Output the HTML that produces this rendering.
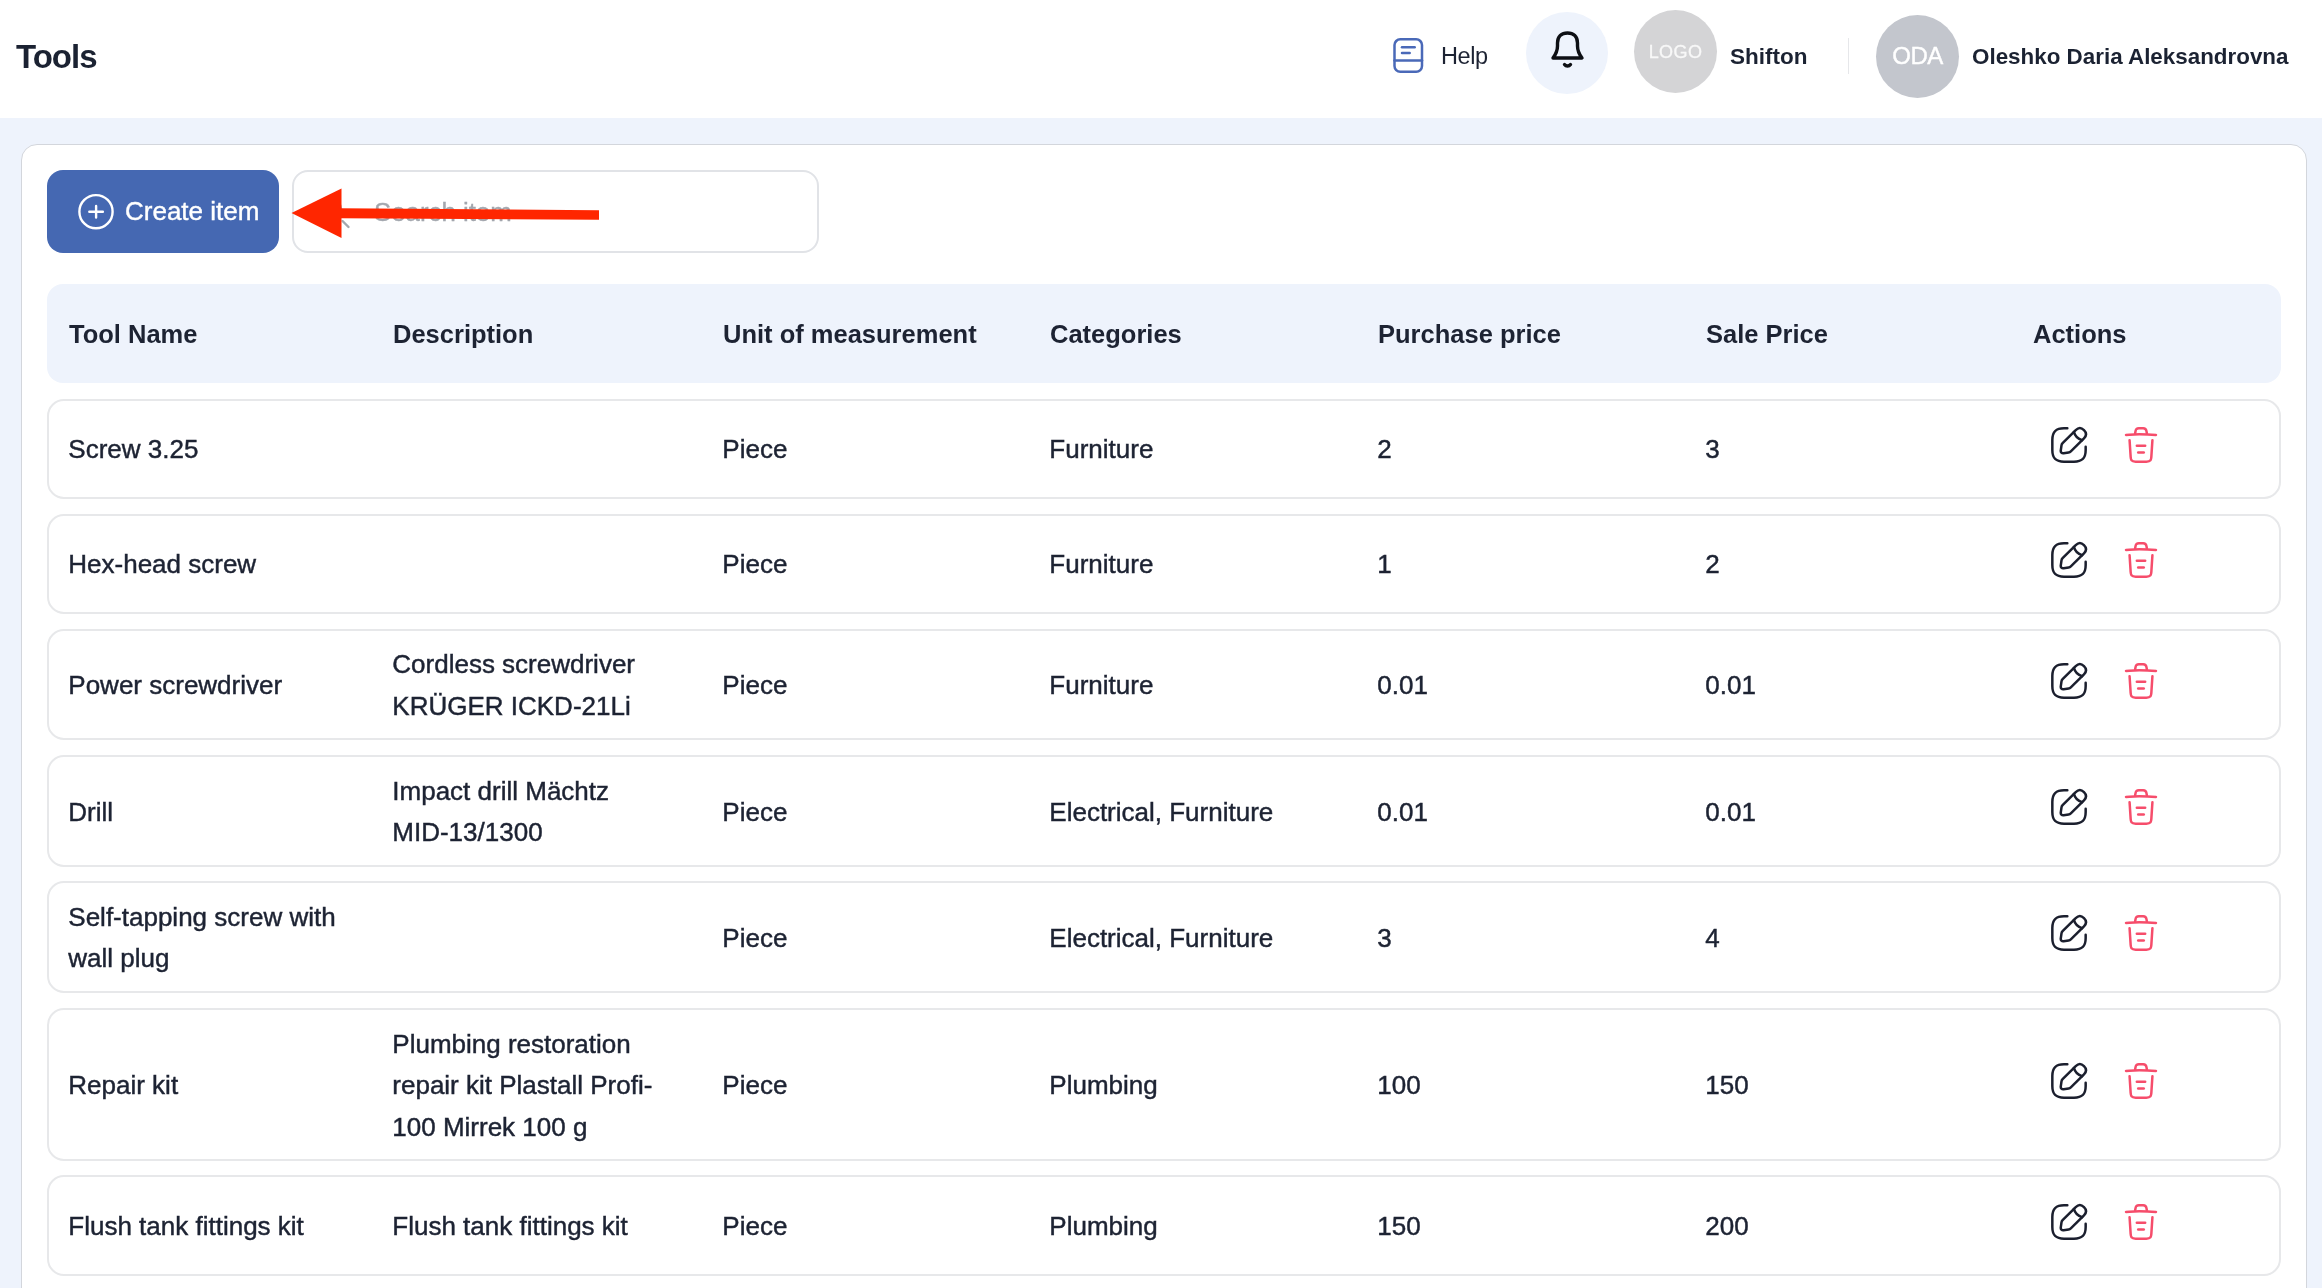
<!DOCTYPE html>
<html><head><meta charset="utf-8">
<style>
*{box-sizing:border-box;margin:0;padding:0}
body{will-change:transform}html,body{width:2322px;height:1288px;overflow:hidden;background:#eef3fc;font-family:"Liberation Sans",sans-serif;color:#1d2333}
.hdr{position:absolute;left:0;top:0;width:2322px;height:118px;background:#fff}
.abs{position:absolute;white-space:nowrap}
.title{left:16px;top:37.1px;font-size:33px;font-weight:bold;letter-spacing:-1px;line-height:40px;color:#1b2232}
.card{position:absolute;left:21px;top:144px;width:2286px;height:1200px;background:#fff;border:1.5px solid #d3d6dc;border-radius:16px}
.btn{position:absolute;left:47px;top:170px;width:232px;height:83px;background:#4568b2;border-radius:16px}
.btntxt{left:125px;top:191px;font-size:26px;line-height:41.6px;color:#fff;-webkit-text-stroke:0.4px #fff}
.search{position:absolute;left:292px;top:170px;width:527px;height:83px;border:2px solid #e1e3e7;border-radius:16px;background:#fff}
.ph{left:374px;top:192.3px;font-size:25.8px;line-height:41.6px;color:#a3a7ae;-webkit-text-stroke:0.35px #a3a7ae}
.thead{position:absolute;left:47px;top:284px;width:2234px;height:99px;background:#eef3fc;border-radius:16px}
.row{position:absolute;left:47px;width:2234px;border:2px solid #e7e8ea;border-radius:17px;background:#fff}
.t{position:absolute;font-size:26px;line-height:41.6px;white-space:nowrap;-webkit-text-stroke:0.45px #1d2333}
.th{position:absolute;font-size:25.5px;font-weight:bold;line-height:40px;white-space:nowrap;top:314px}
.ic{position:absolute}
</style></head>
<body>
<div class="hdr"></div>
<div class="abs title">Tools</div>

<!-- help -->
<svg class="ic" style="left:1390px;top:35px" width="36" height="41" viewBox="0 0 36 41" fill="none" stroke="#4a69b8" stroke-width="2.5" stroke-linecap="round">
  <rect x="4.5" y="4.3" width="27.5" height="32.5" rx="5.8"/>
  <path d="M4.5 25.5h27.5"/>
  <path d="M12 12.2h12.7"/>
  <path d="M12 17.9h7.7"/>
</svg>
<div class="abs" style="left:1441px;top:38px;font-size:23.5px;letter-spacing:-0.4px;line-height:36px;color:#1d2333">Help</div>

<!-- bell -->
<div style="position:absolute;left:1526px;top:11.7px;width:82px;height:82px;border-radius:50%;background:#eef3fc"></div>
<svg class="ic" style="left:1547px;top:28px" width="42" height="42" viewBox="0 0 42 42" fill="none" stroke="#0d0f14" stroke-width="3.4" stroke-linecap="round" stroke-linejoin="round">
  <path d="M6 30 C9 26 10.5 23 10.5 18 V15 C10.5 8.5 14.5 5 20.5 5 C26.5 5 30.5 8.5 30.5 15 V18 C30.5 23 32 26 35 30 Z"/>
  <path d="M17.5 36.5 C19 38.5 22 38.5 23.5 36.5"/>
</svg>

<!-- logo -->
<div style="position:absolute;left:1634px;top:10px;width:83px;height:83px;border-radius:50%;background:#d4d4d6"></div>
<div class="abs" style="left:1634px;top:33.5px;width:83px;text-align:center;font-size:18px;line-height:36px;color:#f8f8f8;letter-spacing:0.4px;-webkit-text-stroke:0.3px #f8f8f8">LOGO</div>
<div class="abs" style="left:1730px;top:38.8px;font-size:22.5px;font-weight:bold;line-height:36px;color:#1b2232">Shifton</div>

<div style="position:absolute;left:1847.5px;top:38px;width:1.5px;height:36px;background:#e6e7ea"></div>

<!-- oda -->
<div style="position:absolute;left:1876px;top:15px;width:83px;height:83px;border-radius:50%;background:#c3c6cd"></div>
<div class="abs" style="left:1876px;top:38px;width:83px;text-align:center;font-size:24px;line-height:36px;color:#fff;letter-spacing:-0.5px;-webkit-text-stroke:0.4px #fff">ODA</div>
<div class="abs" style="left:1972px;top:38.8px;font-size:22.4px;font-weight:bold;line-height:36px;color:#1b2232">Oleshko Daria Aleksandrovna</div>

<div class="card"></div>
<div class="btn"></div>
<svg class="ic" style="left:76px;top:192px" width="40" height="40" viewBox="0 0 40 40" fill="none" stroke="#fff" stroke-width="2.4" stroke-linecap="round">
  <circle cx="20" cy="19.7" r="16.6"/>
  <path d="M13.3 19.7h13.6M20.1 13.9v11.6"/>
</svg>
<div class="abs btntxt">Create item</div>

<div class="search"></div>
<svg class="ic" style="left:318px;top:194px" width="36" height="36" viewBox="0 0 36 36" fill="none" stroke="#a3a7ae" stroke-width="2.4" stroke-linecap="round">
  <circle cx="14" cy="15" r="9"/>
  <path d="M24.5 27l6 6"/>
</svg>
<div class="abs ph">Search item</div>

<!-- red arrow -->
<svg class="ic" style="left:0;top:0;overflow:visible" width="1" height="1">
  <polygon points="291.5,213 341.5,188.5 341.5,238" fill="#ff2600"/>
  <polygon points="340,208.3 599,210.2 599,219.8 340,218.3" fill="#ff2600"/>
</svg>

<div class="thead"></div>
<div class="th" style="left:69px">Tool Name</div>
<div class="th" style="left:393px">Description</div>
<div class="th" style="left:723px">Unit of measurement</div>
<div class="th" style="left:1050px">Categories</div>
<div class="th" style="left:1378px">Purchase price</div>
<div class="th" style="left:1706px">Sale Price</div>
<div class="th" style="left:2033px">Actions</div>

<div class="row" style="top:399px;height:100px"></div>
<div class="t" style="left:68.3px;top:428.7px">Screw 3.25</div>
<div class="t" style="left:722.3px;top:428.7px">Piece</div>
<div class="t" style="left:1049.3px;top:428.7px">Furniture</div>
<div class="t" style="left:1377.3px;top:428.7px">2</div>
<div class="t" style="left:1705.3px;top:428.7px">3</div>
<svg class="ic" style="left:2049px;top:425.0px" width="40" height="40" viewBox="0 0 24 24" fill="none" stroke="#1b1f2e" stroke-width="1.5" stroke-linecap="round" stroke-linejoin="round"><path d="M11 2H9C4 2 2 4 2 9v6c0 5 2 7 7 7h6c5 0 7-2 7-7v-2"/><path d="M16.04 3.02 8.16 10.9c-.3.3-.6.89-.66 1.32l-.43 3.01c-.16 1.09.61 1.85 1.7 1.7l3.01-.43c.42-.06 1.01-.36 1.32-.66l7.88-7.88c1.36-1.36 2-2.94 0-4.94-2-2-3.58-1.36-4.94 0Z"/><path d="M14.91 4.15a7.144 7.144 0 0 0 4.94 4.94"/></svg>
<svg class="ic" style="left:2121px;top:425.0px" width="40" height="40" viewBox="0 0 24 24" fill="none" stroke="#f64d6b" stroke-width="1.5" stroke-linecap="round" stroke-linejoin="round"><path d="M21 5.98c-3.33-.33-6.68-.5-10.02-.5-1.98 0-3.96.1-5.94.3L3 5.98"/><path d="M8.5 4.97l.22-1.31C8.88 2.71 9 2 10.69 2h2.62c1.69 0 1.82.75 1.97 1.67l.22 1.3"/><path d="M18.85 9.14l-.65 10.07C18.09 20.78 18 22 15.21 22H8.79C6 22 5.91 20.78 5.8 19.21L5.15 9.14"/><path d="M10.33 16.5h3.33"/><path d="M9.5 12.5h5"/></svg>
<div class="row" style="top:514px;height:100px"></div>
<div class="t" style="left:68.3px;top:543.7px">Hex-head screw</div>
<div class="t" style="left:722.3px;top:543.7px">Piece</div>
<div class="t" style="left:1049.3px;top:543.7px">Furniture</div>
<div class="t" style="left:1377.3px;top:543.7px">1</div>
<div class="t" style="left:1705.3px;top:543.7px">2</div>
<svg class="ic" style="left:2049px;top:540.0px" width="40" height="40" viewBox="0 0 24 24" fill="none" stroke="#1b1f2e" stroke-width="1.5" stroke-linecap="round" stroke-linejoin="round"><path d="M11 2H9C4 2 2 4 2 9v6c0 5 2 7 7 7h6c5 0 7-2 7-7v-2"/><path d="M16.04 3.02 8.16 10.9c-.3.3-.6.89-.66 1.32l-.43 3.01c-.16 1.09.61 1.85 1.7 1.7l3.01-.43c.42-.06 1.01-.36 1.32-.66l7.88-7.88c1.36-1.36 2-2.94 0-4.94-2-2-3.58-1.36-4.94 0Z"/><path d="M14.91 4.15a7.144 7.144 0 0 0 4.94 4.94"/></svg>
<svg class="ic" style="left:2121px;top:540.0px" width="40" height="40" viewBox="0 0 24 24" fill="none" stroke="#f64d6b" stroke-width="1.5" stroke-linecap="round" stroke-linejoin="round"><path d="M21 5.98c-3.33-.33-6.68-.5-10.02-.5-1.98 0-3.96.1-5.94.3L3 5.98"/><path d="M8.5 4.97l.22-1.31C8.88 2.71 9 2 10.69 2h2.62c1.69 0 1.82.75 1.97 1.67l.22 1.3"/><path d="M18.85 9.14l-.65 10.07C18.09 20.78 18 22 15.21 22H8.79C6 22 5.91 20.78 5.8 19.21L5.15 9.14"/><path d="M10.33 16.5h3.33"/><path d="M9.5 12.5h5"/></svg>
<div class="row" style="top:629px;height:111px"></div>
<div class="t" style="left:68.3px;top:665.1px">Power screwdriver</div>
<div class="t" style="left:392.3px;top:644.3px">Cordless screwdriver<br>KRÜGER ICKD-21Li</div>
<div class="t" style="left:722.3px;top:665.1px">Piece</div>
<div class="t" style="left:1049.3px;top:665.1px">Furniture</div>
<div class="t" style="left:1377.3px;top:665.1px">0.01</div>
<div class="t" style="left:1705.3px;top:665.1px">0.01</div>
<svg class="ic" style="left:2049px;top:660.5px" width="40" height="40" viewBox="0 0 24 24" fill="none" stroke="#1b1f2e" stroke-width="1.5" stroke-linecap="round" stroke-linejoin="round"><path d="M11 2H9C4 2 2 4 2 9v6c0 5 2 7 7 7h6c5 0 7-2 7-7v-2"/><path d="M16.04 3.02 8.16 10.9c-.3.3-.6.89-.66 1.32l-.43 3.01c-.16 1.09.61 1.85 1.7 1.7l3.01-.43c.42-.06 1.01-.36 1.32-.66l7.88-7.88c1.36-1.36 2-2.94 0-4.94-2-2-3.58-1.36-4.94 0Z"/><path d="M14.91 4.15a7.144 7.144 0 0 0 4.94 4.94"/></svg>
<svg class="ic" style="left:2121px;top:660.5px" width="40" height="40" viewBox="0 0 24 24" fill="none" stroke="#f64d6b" stroke-width="1.5" stroke-linecap="round" stroke-linejoin="round"><path d="M21 5.98c-3.33-.33-6.68-.5-10.02-.5-1.98 0-3.96.1-5.94.3L3 5.98"/><path d="M8.5 4.97l.22-1.31C8.88 2.71 9 2 10.69 2h2.62c1.69 0 1.82.75 1.97 1.67l.22 1.3"/><path d="M18.85 9.14l-.65 10.07C18.09 20.78 18 22 15.21 22H8.79C6 22 5.91 20.78 5.8 19.21L5.15 9.14"/><path d="M10.33 16.5h3.33"/><path d="M9.5 12.5h5"/></svg>
<div class="row" style="top:755px;height:112px"></div>
<div class="t" style="left:68.3px;top:791.6px">Drill</div>
<div class="t" style="left:392.3px;top:770.8px">Impact drill Mächtz<br>MID-13/1300</div>
<div class="t" style="left:722.3px;top:791.6px">Piece</div>
<div class="t" style="left:1049.3px;top:791.6px">Electrical, Furniture</div>
<div class="t" style="left:1377.3px;top:791.6px">0.01</div>
<div class="t" style="left:1705.3px;top:791.6px">0.01</div>
<svg class="ic" style="left:2049px;top:787.0px" width="40" height="40" viewBox="0 0 24 24" fill="none" stroke="#1b1f2e" stroke-width="1.5" stroke-linecap="round" stroke-linejoin="round"><path d="M11 2H9C4 2 2 4 2 9v6c0 5 2 7 7 7h6c5 0 7-2 7-7v-2"/><path d="M16.04 3.02 8.16 10.9c-.3.3-.6.89-.66 1.32l-.43 3.01c-.16 1.09.61 1.85 1.7 1.7l3.01-.43c.42-.06 1.01-.36 1.32-.66l7.88-7.88c1.36-1.36 2-2.94 0-4.94-2-2-3.58-1.36-4.94 0Z"/><path d="M14.91 4.15a7.144 7.144 0 0 0 4.94 4.94"/></svg>
<svg class="ic" style="left:2121px;top:787.0px" width="40" height="40" viewBox="0 0 24 24" fill="none" stroke="#f64d6b" stroke-width="1.5" stroke-linecap="round" stroke-linejoin="round"><path d="M21 5.98c-3.33-.33-6.68-.5-10.02-.5-1.98 0-3.96.1-5.94.3L3 5.98"/><path d="M8.5 4.97l.22-1.31C8.88 2.71 9 2 10.69 2h2.62c1.69 0 1.82.75 1.97 1.67l.22 1.3"/><path d="M18.85 9.14l-.65 10.07C18.09 20.78 18 22 15.21 22H8.79C6 22 5.91 20.78 5.8 19.21L5.15 9.14"/><path d="M10.33 16.5h3.33"/><path d="M9.5 12.5h5"/></svg>
<div class="row" style="top:881px;height:112px"></div>
<div class="t" style="left:68.3px;top:896.8px">Self-tapping screw with<br>wall plug</div>
<div class="t" style="left:722.3px;top:917.6px">Piece</div>
<div class="t" style="left:1049.3px;top:917.6px">Electrical, Furniture</div>
<div class="t" style="left:1377.3px;top:917.6px">3</div>
<div class="t" style="left:1705.3px;top:917.6px">4</div>
<svg class="ic" style="left:2049px;top:913.0px" width="40" height="40" viewBox="0 0 24 24" fill="none" stroke="#1b1f2e" stroke-width="1.5" stroke-linecap="round" stroke-linejoin="round"><path d="M11 2H9C4 2 2 4 2 9v6c0 5 2 7 7 7h6c5 0 7-2 7-7v-2"/><path d="M16.04 3.02 8.16 10.9c-.3.3-.6.89-.66 1.32l-.43 3.01c-.16 1.09.61 1.85 1.7 1.7l3.01-.43c.42-.06 1.01-.36 1.32-.66l7.88-7.88c1.36-1.36 2-2.94 0-4.94-2-2-3.58-1.36-4.94 0Z"/><path d="M14.91 4.15a7.144 7.144 0 0 0 4.94 4.94"/></svg>
<svg class="ic" style="left:2121px;top:913.0px" width="40" height="40" viewBox="0 0 24 24" fill="none" stroke="#f64d6b" stroke-width="1.5" stroke-linecap="round" stroke-linejoin="round"><path d="M21 5.98c-3.33-.33-6.68-.5-10.02-.5-1.98 0-3.96.1-5.94.3L3 5.98"/><path d="M8.5 4.97l.22-1.31C8.88 2.71 9 2 10.69 2h2.62c1.69 0 1.82.75 1.97 1.67l.22 1.3"/><path d="M18.85 9.14l-.65 10.07C18.09 20.78 18 22 15.21 22H8.79C6 22 5.91 20.78 5.8 19.21L5.15 9.14"/><path d="M10.33 16.5h3.33"/><path d="M9.5 12.5h5"/></svg>
<div class="row" style="top:1008px;height:153px"></div>
<div class="t" style="left:68.3px;top:1065.1px">Repair kit</div>
<div class="t" style="left:392.3px;top:1023.5px">Plumbing restoration<br>repair kit Plastall Profi-<br>100 Mirrek 100 g</div>
<div class="t" style="left:722.3px;top:1065.1px">Piece</div>
<div class="t" style="left:1049.3px;top:1065.1px">Plumbing</div>
<div class="t" style="left:1377.3px;top:1065.1px">100</div>
<div class="t" style="left:1705.3px;top:1065.1px">150</div>
<svg class="ic" style="left:2049px;top:1060.5px" width="40" height="40" viewBox="0 0 24 24" fill="none" stroke="#1b1f2e" stroke-width="1.5" stroke-linecap="round" stroke-linejoin="round"><path d="M11 2H9C4 2 2 4 2 9v6c0 5 2 7 7 7h6c5 0 7-2 7-7v-2"/><path d="M16.04 3.02 8.16 10.9c-.3.3-.6.89-.66 1.32l-.43 3.01c-.16 1.09.61 1.85 1.7 1.7l3.01-.43c.42-.06 1.01-.36 1.32-.66l7.88-7.88c1.36-1.36 2-2.94 0-4.94-2-2-3.58-1.36-4.94 0Z"/><path d="M14.91 4.15a7.144 7.144 0 0 0 4.94 4.94"/></svg>
<svg class="ic" style="left:2121px;top:1060.5px" width="40" height="40" viewBox="0 0 24 24" fill="none" stroke="#f64d6b" stroke-width="1.5" stroke-linecap="round" stroke-linejoin="round"><path d="M21 5.98c-3.33-.33-6.68-.5-10.02-.5-1.98 0-3.96.1-5.94.3L3 5.98"/><path d="M8.5 4.97l.22-1.31C8.88 2.71 9 2 10.69 2h2.62c1.69 0 1.82.75 1.97 1.67l.22 1.3"/><path d="M18.85 9.14l-.65 10.07C18.09 20.78 18 22 15.21 22H8.79C6 22 5.91 20.78 5.8 19.21L5.15 9.14"/><path d="M10.33 16.5h3.33"/><path d="M9.5 12.5h5"/></svg>
<div class="row" style="top:1175px;height:101px"></div>
<div class="t" style="left:68.3px;top:1206.1px">Flush tank fittings kit</div>
<div class="t" style="left:392.3px;top:1206.1px">Flush tank fittings kit</div>
<div class="t" style="left:722.3px;top:1206.1px">Piece</div>
<div class="t" style="left:1049.3px;top:1206.1px">Plumbing</div>
<div class="t" style="left:1377.3px;top:1206.1px">150</div>
<div class="t" style="left:1705.3px;top:1206.1px">200</div>
<svg class="ic" style="left:2049px;top:1201.5px" width="40" height="40" viewBox="0 0 24 24" fill="none" stroke="#1b1f2e" stroke-width="1.5" stroke-linecap="round" stroke-linejoin="round"><path d="M11 2H9C4 2 2 4 2 9v6c0 5 2 7 7 7h6c5 0 7-2 7-7v-2"/><path d="M16.04 3.02 8.16 10.9c-.3.3-.6.89-.66 1.32l-.43 3.01c-.16 1.09.61 1.85 1.7 1.7l3.01-.43c.42-.06 1.01-.36 1.32-.66l7.88-7.88c1.36-1.36 2-2.94 0-4.94-2-2-3.58-1.36-4.94 0Z"/><path d="M14.91 4.15a7.144 7.144 0 0 0 4.94 4.94"/></svg>
<svg class="ic" style="left:2121px;top:1201.5px" width="40" height="40" viewBox="0 0 24 24" fill="none" stroke="#f64d6b" stroke-width="1.5" stroke-linecap="round" stroke-linejoin="round"><path d="M21 5.98c-3.33-.33-6.68-.5-10.02-.5-1.98 0-3.96.1-5.94.3L3 5.98"/><path d="M8.5 4.97l.22-1.31C8.88 2.71 9 2 10.69 2h2.62c1.69 0 1.82.75 1.97 1.67l.22 1.3"/><path d="M18.85 9.14l-.65 10.07C18.09 20.78 18 22 15.21 22H8.79C6 22 5.91 20.78 5.8 19.21L5.15 9.14"/><path d="M10.33 16.5h3.33"/><path d="M9.5 12.5h5"/></svg>
</body></html>
